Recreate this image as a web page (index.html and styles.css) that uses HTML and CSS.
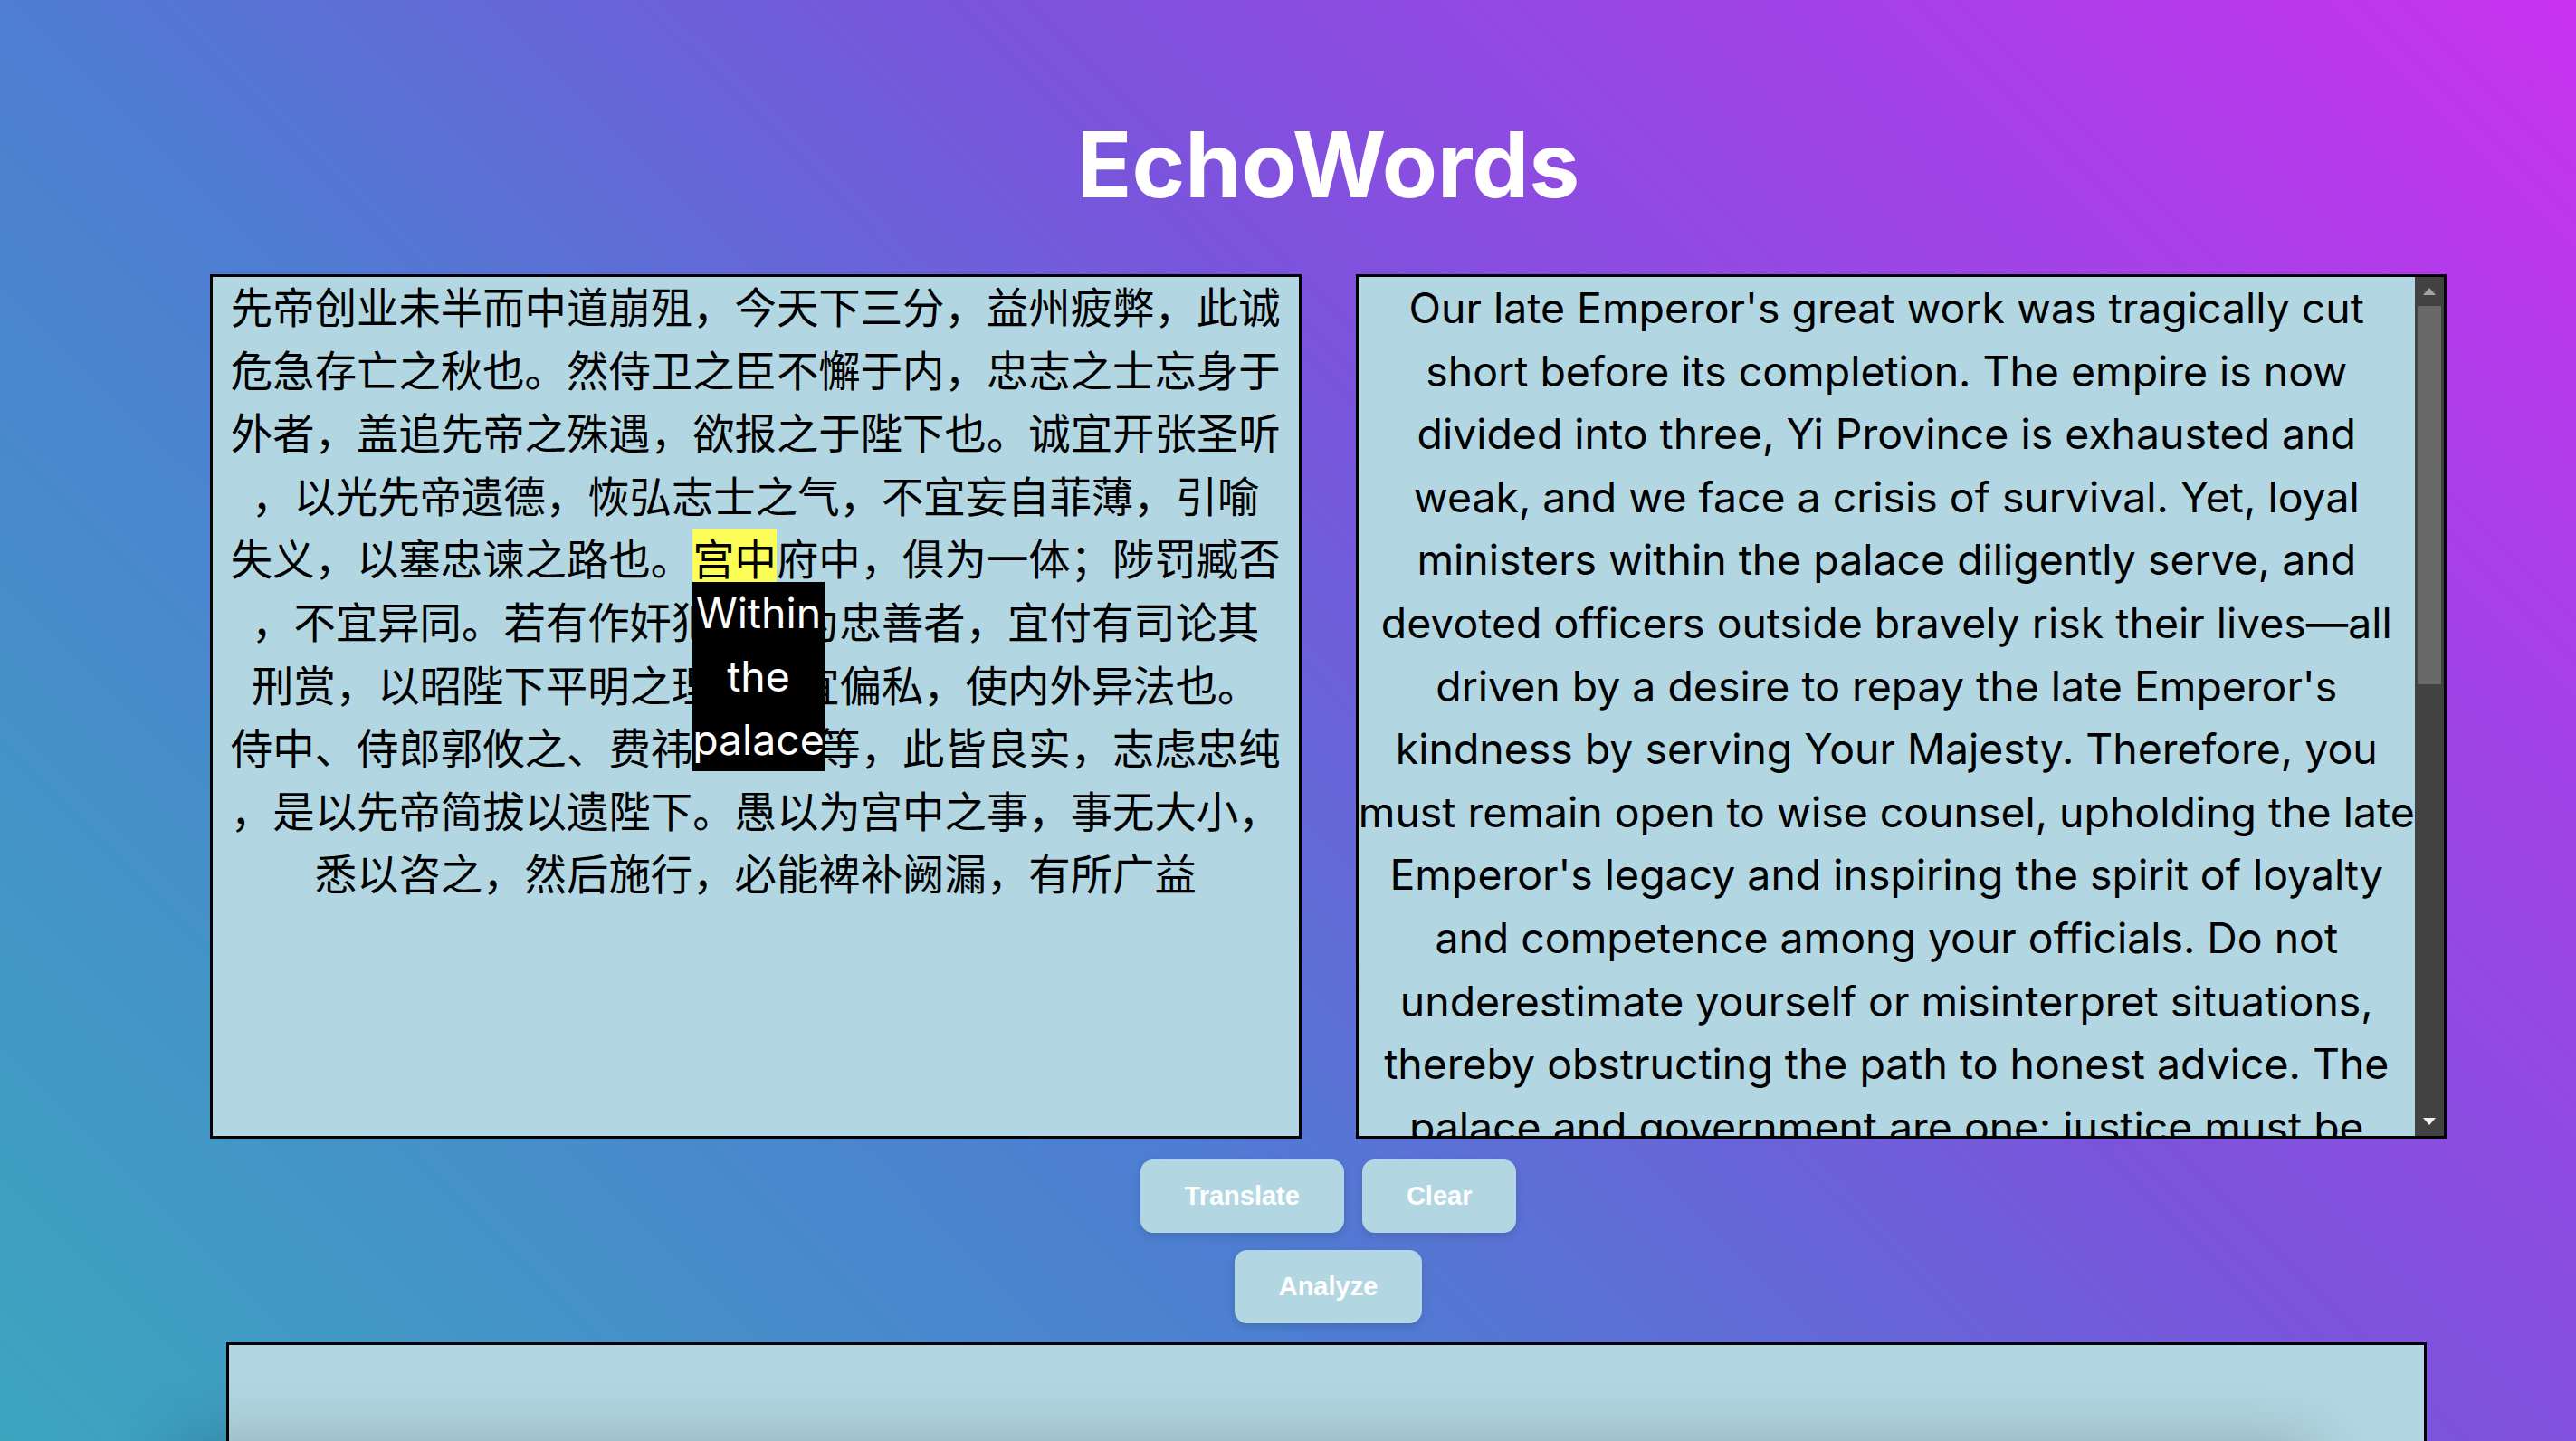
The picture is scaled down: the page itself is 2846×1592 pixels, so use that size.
FILE: index.html
```html
<!DOCTYPE html>
<html lang="en">
<head>
<meta charset="utf-8">
<title>EchoWords</title>
<link rel="stylesheet" href="styles.css">
</head>
<body>
<div class="page">
  <main class="app">
    <h1 class="title">EchoWords</h1>
    <div class="panes">
      <div class="pane source" lang="zh-CN"><span class="w">先帝</span><span class="w">创业</span><span class="w">未半</span><span class="w">而</span><span class="w">中道</span><span class="w">崩殂</span><span class="w">，</span><span class="w">今</span><span class="w">天下</span><span class="w">三分</span><span class="w">，</span><span class="w">益州</span><span class="w">疲弊</span><span class="w">，</span><span class="w">此</span><span class="w">诚</span><span class="w">危急</span><span class="w">存亡</span><span class="w">之</span><span class="w">秋</span><span class="w">也</span><span class="w">。</span><span class="w">然</span><span class="w">侍卫</span><span class="w">之</span><span class="w">臣</span><span class="w">不懈</span><span class="w">于</span><span class="w">内</span><span class="w">，</span><span class="w">忠志</span><span class="w">之</span><span class="w">士</span><span class="w">忘身</span><span class="w">于</span><span class="w">外者</span><span class="w">，</span><span class="w">盖</span><span class="w">追</span><span class="w">先帝</span><span class="w">之</span><span class="w">殊遇</span><span class="w">，</span><span class="w">欲报</span><span class="w">之</span><span class="w">于</span><span class="w">陛下</span><span class="w">也</span><span class="w">。</span><span class="w">诚</span><span class="w">宜</span><span class="w">开张</span><span class="w">圣听</span><span class="w">，</span><span class="w">以</span><span class="w">光</span><span class="w">先帝</span><span class="w">遗德</span><span class="w">，</span><span class="w">恢弘</span><span class="w">志士</span><span class="w">之</span><span class="w">气</span><span class="w">，</span><span class="w">不宜</span><span class="w">妄自菲薄</span><span class="w">，</span><span class="w">引喻</span><span class="w">失义</span><span class="w">，</span><span class="w">以</span><span class="w">塞</span><span class="w">忠谏</span><span class="w">之</span><span class="w">路</span><span class="w">也</span><span class="w">。</span><span class="w hl">宫中<span class="tip">Within the palace</span></span><span class="w">府中</span><span class="w">，</span><span class="w">俱</span><span class="w">为</span><span class="w">一体</span><span class="w">；</span><span class="w">陟罚</span><span class="w">臧否</span><span class="w">，</span><span class="w">不宜</span><span class="w">异同</span><span class="w">。</span><span class="w">若</span><span class="w">有</span><span class="w">作奸犯科</span><span class="w">及</span><span class="w">为</span><span class="w">忠善</span><span class="w">者</span><span class="w">，</span><span class="w">宜</span><span class="w">付</span><span class="w">有司</span><span class="w">论</span><span class="w">其</span><span class="w">刑赏</span><span class="w">，</span><span class="w">以</span><span class="w">昭</span><span class="w">陛下</span><span class="w">平明</span><span class="w">之</span><span class="w">理</span><span class="w">，</span><span class="w">不宜</span><span class="w">偏私</span><span class="w">，</span><span class="w">使</span><span class="w">内外</span><span class="w">异法</span><span class="w">也</span><span class="w">。</span><span class="w">侍中</span><span class="w">、</span><span class="w">侍郎</span><span class="w">郭攸之</span><span class="w">、</span><span class="w">费祎</span><span class="w">、</span><span class="w">董允</span><span class="w">等</span><span class="w">，</span><span class="w">此</span><span class="w">皆</span><span class="w">良实</span><span class="w">，</span><span class="w">志虑</span><span class="w">忠纯</span><span class="w">，</span><span class="w">是以</span><span class="w">先帝</span><span class="w">简拔</span><span class="w">以</span><span class="w">遗</span><span class="w">陛下</span><span class="w">。</span><span class="w">愚</span><span class="w">以为</span><span class="w">宫中</span><span class="w">之</span><span class="w">事</span><span class="w">，</span><span class="w">事</span><span class="w">无</span><span class="w">大小</span><span class="w">，</span><span class="w">悉</span><span class="w">以</span><span class="w">咨</span><span class="w">之</span><span class="w">，</span><span class="w">然后</span><span class="w">施行</span><span class="w">，</span><span class="w">必能</span><span class="w">裨补</span><span class="w">阙漏</span><span class="w">，</span><span class="w">有所</span><span class="w">广益</span></div>
      <div class="pane output">
        <div class="output-text">Our late Emperor's great work was tragically cut short before its completion. The empire is now divided into three, Yi Province is exhausted and weak, and we face a crisis of survival. Yet, loyal ministers within the palace diligently serve, and devoted officers outside bravely risk their lives—all driven by a desire to repay the late Emperor's kindness by serving Your Majesty. Therefore, you must remain open to wise counsel, upholding the late Emperor's legacy and inspiring the spirit of loyalty and competence among your officials. Do not underestimate yourself or misinterpret situations, thereby obstructing the path to honest advice. The palace and government are one; justice must be applied equally, and rewards and punishments should not differ between them. If there are those who commit crimes or who act loyally and virtuously, they should be handed over to the proper officials to decide their punishment or reward, thereby demonstrating Your Majesty's fair and enlightened governance.</div>
        <div class="scrollbar" aria-hidden="true">
          <div class="sb-btn"><svg width="14" height="8" viewBox="0 0 14 8"><path d="M7 0L14 8H0Z" fill="#a3a3a3"/></svg></div>
          <div class="sb-track"><div class="sb-thumb"></div></div>
          <div class="sb-btn"><svg width="14" height="8" viewBox="0 0 14 8"><path d="M0 0H14L7 8Z" fill="#f2f2f2"/></svg></div>
        </div>
      </div>
    </div>
    <div class="actions">
      <div class="row">
        <button class="btn" type="button">Translate</button>
        <button class="btn" type="button">Clear</button>
      </div>
      <div class="row">
        <button class="btn" type="button">Analyze</button>
      </div>
    </div>
    <section class="analysis">
      <div class="analysis-body"></div>
    </section>
  </main>
</div>
</body>
</html>
```

FILE: styles.css
```css
html, body {
  margin: 0;
  padding: 0;
  height: 100%;
  overflow: hidden;
}

body {
  background: linear-gradient(45deg, rgb(60, 165, 190) 0%, rgb(78, 125, 210) 36%, rgb(122, 84, 220) 60%, rgb(200, 50, 240) 100%);
  font-family: Inter, "Noto Sans CJK SC", sans-serif;
}

.page {
  box-sizing: border-box;
  height: 100vh;
  overflow: hidden;
  padding-left: 89px;
}

.app {
  width: 2471px;
  margin: 0 auto;
  padding-top: 121px;
}

.title {
  margin: 0 0 61px;
  font-family: Inter, "Liberation Sans", sans-serif;
  font-weight: 700;
  font-size: 100px;
  line-height: 121px;
  color: #ffffff;
  text-align: center;
}

.panes {
  display: flex;
  gap: 60px;
  height: 955px;
}

.pane {
  flex: 1 1 0;
  min-width: 0;
  box-sizing: border-box;
  border: 3px solid #000000;
  background: #b2d7e2;
  color: #000000;
  font-family: Inter, "Noto Sans CJK SC", sans-serif;
  font-size: 46.4px;
  line-height: 69.6px;
  text-align: center;
}

.w {
  display: inline-block;
}

.hl {
  position: relative;
  vertical-align: top;
  height: 59px;
  background: #fdfd58;
}

.tip {
  position: absolute;
  top: 100%;
  left: 0;
  z-index: 2;
  background: #000000;
  color: #ffffff;
  text-align: center;
}

.output {
  display: flex;
}

.output-text {
  flex: 1 1 0;
  min-width: 0;
  overflow: hidden;
}

.scrollbar {
  flex: 0 0 32px;
  display: flex;
  flex-direction: column;
  background: #424242;
}

.sb-btn {
  flex: 0 0 32px;
  display: flex;
  align-items: center;
  justify-content: center;
}

.sb-btn svg {
  display: block;
}

.sb-track {
  flex: 1 1 auto;
  padding: 0 3px;
}

.sb-thumb {
  height: 418px;
  background: #686868;
}

.actions {
  display: flex;
  flex-direction: column;
  align-items: center;
  gap: 19px;
  margin-top: 23px;
}

.row {
  display: flex;
  gap: 20px;
}

.btn {
  height: 81px;
  padding: 0 49px;
  border: 0;
  border-radius: 14px;
  background: #b2d7e2;
  color: #ffffff;
  font-family: "Liberation Sans", Arial, sans-serif;
  font-weight: 700;
  font-size: 29px;
  line-height: 81px;
  box-shadow: 0 4px 10px rgba(0, 0, 0, 0.12);
  cursor: pointer;
}

.analysis {
  margin: 21px 22px 0 18px;
  height: 500px;
  border: 3px solid #000000;
  background: #b2d7e2;
}

.analysis-body {
  margin: 120px 130px 0 -50px;
  height: 300px;
  box-shadow: 0 0 70px 10px rgba(0, 0, 0, 0.22);
}
```
